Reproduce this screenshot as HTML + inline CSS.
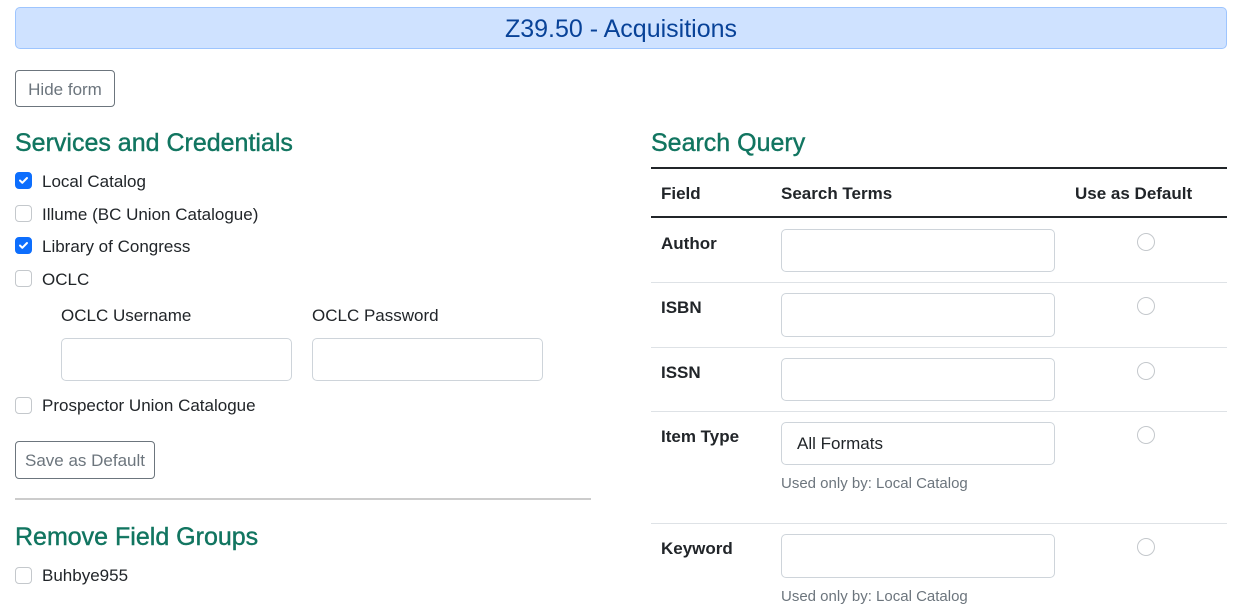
<!DOCTYPE html>
<html><head><meta charset="utf-8"><style>
*{box-sizing:border-box;margin:0;padding:0}
body{width:1246px;height:614px;overflow:hidden;background:#fff;font-family:"Liberation Sans",sans-serif;color:#212529;position:relative}
.a{position:absolute;white-space:nowrap}
.banner{left:15px;top:7px;width:1212px;height:42px;background:#cfe2ff;border:1px solid #9ec5fe;border-radius:5px;color:#084298;font-size:25px;text-align:center;line-height:42px}
.btn{border:1px solid #6c757d;border-radius:4px;color:#6c757d;font-size:17px;text-align:center}
h2{position:absolute;font-size:25px;font-weight:normal;color:#117560;white-space:nowrap;-webkit-text-stroke:0.4px #117560}
.cb{position:absolute;left:15px;width:17px;height:17px;border:1px solid #c4c8cc;border-radius:4px;background:#fff}
.cb.on{background:#0d6efd;border-color:#0d6efd}
.cb.on svg{position:absolute;left:2px;top:2px}
.lbl{position:absolute;left:42px;font-size:17px;white-space:nowrap}
.inp{position:absolute;border:1px solid #ced4da;border-radius:5px;background:#fff}
.th{position:absolute;font-size:17px;font-weight:bold;white-space:nowrap}
.hr{position:absolute;left:651px;width:576px;height:1px;background:#dee2e6}
.rad{position:absolute;left:1137px;width:18px;height:18px;border:1px solid #c4c8cc;border-radius:50%}
.help{position:absolute;left:781px;font-size:15px;color:#6c757d;white-space:nowrap}
</style></head><body>
<div class="a banner">Z39.50 - Acquisitions</div>
<div class="a btn" style="left:15px;top:70px;width:100px;height:37px;line-height:37px">Hide form</div>
<h2 style="left:15px;top:129px">Services and Credentials</h2>
<div class="cb on" style="top:172px"><svg width="11" height="11" viewBox="0 0 11 11"><path d="M2 5.5l2.3 2.3L9 3" stroke="#fff" stroke-width="2" fill="none" stroke-linecap="round" stroke-linejoin="round"/></svg></div>
<div class="lbl" style="top:172px">Local Catalog</div>
<div class="cb" style="top:205px"></div>
<div class="lbl" style="top:205px">Illume (BC Union Catalogue)</div>
<div class="cb on" style="top:237px"><svg width="11" height="11" viewBox="0 0 11 11"><path d="M2 5.5l2.3 2.3L9 3" stroke="#fff" stroke-width="2" fill="none" stroke-linecap="round" stroke-linejoin="round"/></svg></div>
<div class="lbl" style="top:237px">Library of Congress</div>
<div class="cb" style="top:270px"></div>
<div class="lbl" style="top:270px">OCLC</div>
<div class="lbl" style="left:61px;top:306px">OCLC Username</div>
<div class="lbl" style="left:312px;top:306px">OCLC Password</div>
<div class="inp" style="left:61px;top:338px;width:231px;height:43px"></div>
<div class="inp" style="left:312px;top:338px;width:231px;height:43px"></div>
<div class="cb" style="top:397px"></div>
<div class="lbl" style="top:396px">Prospector Union Catalogue</div>
<div class="a btn" style="left:15px;top:441px;width:140px;height:38px;line-height:38px">Save as Default</div>
<div class="a" style="left:15px;top:498px;width:576px;height:2px;background:#ccc"></div>
<h2 style="left:15px;top:523px">Remove Field Groups</h2>
<div class="cb" style="top:567px"></div>
<div class="lbl" style="top:566px">Buhbye955</div>

<h2 style="left:651px;top:129px">Search Query</h2>
<div class="a" style="left:651px;top:167px;width:576px;height:2px;background:#212529"></div>
<div class="th" style="left:661px;top:184px">Field</div>
<div class="th" style="left:781px;top:184px">Search Terms</div>
<div class="th" style="left:1075px;top:184px">Use as Default</div>
<div class="a" style="left:651px;top:216px;width:576px;height:2px;background:#212529"></div>

<div class="th" style="left:661px;top:234px">Author</div>
<div class="inp" style="left:781px;top:229px;width:274px;height:43px"></div>
<div class="rad" style="top:233px"></div>
<div class="hr" style="top:282px"></div>

<div class="th" style="left:661px;top:298px">ISBN</div>
<div class="inp" style="left:781px;top:293px;width:274px;height:44px"></div>
<div class="rad" style="top:297px"></div>
<div class="hr" style="top:347px"></div>

<div class="th" style="left:661px;top:363px">ISSN</div>
<div class="inp" style="left:781px;top:358px;width:274px;height:43px"></div>
<div class="rad" style="top:362px"></div>
<div class="hr" style="top:411px"></div>

<div class="th" style="left:661px;top:427px">Item Type</div>
<div class="inp" style="left:781px;top:422px;width:274px;height:43px"></div>
<div class="lbl" style="left:797px;top:434px">All Formats</div>
<div class="help" style="top:475px">Used only by: Local Catalog</div>
<div class="rad" style="top:426px"></div>
<div class="hr" style="top:523px"></div>

<div class="th" style="left:661px;top:539px">Keyword</div>
<div class="inp" style="left:781px;top:534px;width:274px;height:44px"></div>
<div class="help" style="top:588px">Used only by: Local Catalog</div>
<div class="rad" style="top:538px"></div>
</body></html>
